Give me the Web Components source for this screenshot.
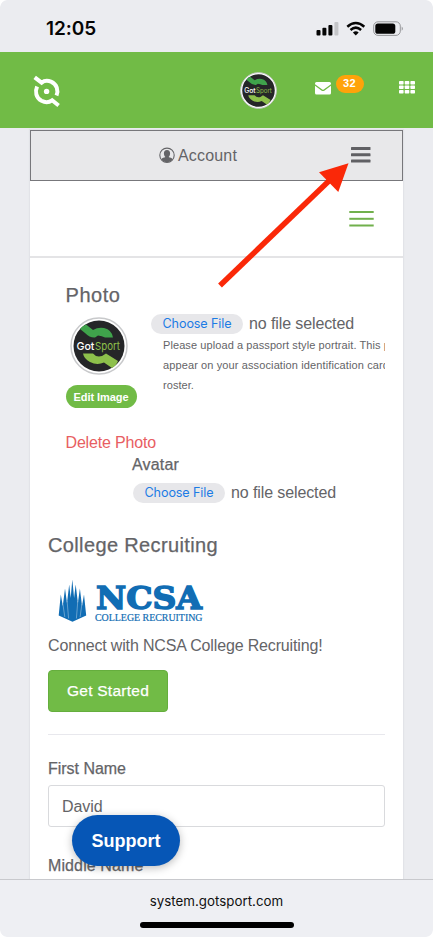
<!DOCTYPE html>
<html lang="en">
<head>
<meta charset="utf-8">
<title>GotSport account</title>
<style>
html,body{margin:0;height:100%;overflow:hidden;background:#ebecf0}
body{font-family:"Liberation Sans",Arial,sans-serif;color:#646467}
</style>
</head>
<body>
<account-screen></account-screen>
<script>
const define = (name, html, init) => customElements.define(name, class extends HTMLElement {
  connectedCallback() {
    if (this.shadowRoot) return;
    const t = document.createElement('template');
    t.innerHTML = html;
    this.attachShadow({mode: 'open'}).append(t.content.cloneNode(true));
    if (init) init.call(this);
  }
});

/* One line of text; "w" tracks the letters so that the line has that width. */
define('ui-text', `<style>
:host{display:block;white-space:nowrap;width:max-content;line-height:20px;font-size:16px}
:host([medium]) span{-webkit-text-stroke:.25px currentColor}
span{display:inline-block}
</style><span><slot></slot></span>`, function () {
  const w = parseFloat(this.getAttribute('w'));
  const s = this.shadowRoot.querySelector('span');
  const n = this.textContent.length;
  if (w && n) s.style.letterSpacing = ((w - s.getBoundingClientRect().width) / n) + 'px';
});

define('status-bar', `<style>
:host{display:flex;height:52px;box-sizing:border-box;padding:0 29px 0 46px;justify-content:space-between;color:#050505;font-family:Inter,sans-serif}
ui-text{font-size:19px;font-weight:600;line-height:24px;margin-top:17px}
svg{margin-top:20px}
</style>
<ui-text w="50">12:05</ui-text>
<svg width="88" height="18" viewBox="316 20 88 18">
<g fill="#050505"><rect x="316.5" y="30" width="4" height="5.5" rx="1"/><rect x="322.4" y="27.8" width="4" height="7.7" rx="1"/><rect x="328.4" y="25" width="4" height="10.5" rx="1"/></g>
<rect x="334.4" y="22" width="4" height="13.5" rx="1" fill="#c4c5c8"/>
<g fill="none" stroke="#050505" stroke-width="2.5"><path d="M347.3 26.7Q355.8 19.2 364.3 26.7"/><path d="M350.5 30Q355.8 25.3 361.1 30"/></g>
<path d="M352.9 32.4Q355.8 30 358.7 32.4L355.8 35.5Z" fill="#050505"/>
<rect x="373.7" y="21.8" width="26.6" height="13.6" rx="4.3" fill="none" stroke="#96979a"/>
<rect x="375.3" y="23.5" width="20" height="10.3" rx="2.6" fill="#050505"/>
<path d="M401.7 26.6q2.4 2 0 4.2z" fill="#96979a"/>
</svg>`);

define('gotsport-badge', `<style>:host{display:block}svg{display:block;width:100%;height:100%}</style>
<svg viewBox="0 0 58 58">
<circle cx="29" cy="29" r="28" fill="#fff" stroke="#c8c9cb" stroke-width="1.5"/>
<circle cx="29" cy="29" r="25.5" fill="#252628"/>
<path d="M16 7.5L23 13Q28 10 34 11Q42 13 43 20.5H35Q32 19 28 18.5L25 20.5Q20 21 15 16L10 12Q12 9 16 7.5Z" fill="#3fa34b"/>
<path d="M13 36.5H23Q26 40.5 32 39L36 36.5L48 44Q46 49 42 51L34 45.5Q27 48.5 20 45Q14 42 13 36.5Z" fill="#8dc04b"/>
<text x="6.5" y="32.6" style="font-family:Inter,sans-serif;font-size:11px;font-weight:500" fill="#fff" textLength="18" lengthAdjust="spacingAndGlyphs">Got</text>
<text x="25" y="32.6" style="font-family:Inter,sans-serif;font-size:11px" fill="#8dc04b" textLength="25" lengthAdjust="spacingAndGlyphs">Sport</text>
</svg>`);

define('app-header', `<style>
:host{display:flex;height:75.5px;background:#71bb46;box-sizing:border-box;padding-left:33px;align-items:flex-start;color:#fff}
.logo{margin-top:23px;flex:none}
gotsport-badge{width:37px;height:37px;margin:19.5px 0 0 179px;flex:none}
.mail{margin:30px 0 0 38px;flex:none}
.count{height:18px;width:28px;border-radius:9px;background:#ffa30a;margin:22.5px 0 0 4.5px;display:flex;justify-content:center;align-items:center;flex:none}
.count ui-text{font-size:11px;font-weight:700;line-height:17px}
.grid{margin:29px 0 0 35px;flex:none}
</style>
<svg class="logo" width="28" height="34" viewBox="33 75 28 34" fill="none" stroke="#fff">
<path stroke-width="4" d="M34.7 77.3L41.6 82.7C44 80.7 48 80.5 51 81.6C57 84.1 58.6 90.5 56.5 95.6"/>
<path stroke-width="4" d="M37.1 86.5C34.8 91.5 36 97.8 41.5 100.8C45 102.6 49 102.5 52.1 100.3L58.6 105.5"/>
<circle cx="46.6" cy="91.4" r="2.7" fill="#fff" stroke="none"/>
</svg>
<gotsport-badge></gotsport-badge>
<svg class="mail" width="16" height="13" viewBox="0 0 16 13" fill="#fff"><path d="M1.5 0h13A1.5 1.5 0 0 1 16 1.5V2.3L8.7 7.6Q8 8 7.3 7.6L0 2.3V1.5A1.5 1.5 0 0 1 1.5 0Z"/><path d="M0 3.8L6.7 8.7Q8 9.4 9.3 8.7L16 3.8V11A1.5 1.5 0 0 1 14.5 12.5H1.5A1.5 1.5 0 0 1 0 11Z"/></svg>
<div class="count"><ui-text w="13">32</ui-text></div>
<svg class="grid" width="17" height="13" viewBox="0 0 17 13" fill="#fff">
<rect x="0" y="0" width="4.6" height="3.5" rx=".7"/><rect x="5.7" y="0" width="4.6" height="3.5" rx=".7"/><rect x="11.4" y="0" width="4.6" height="3.5" rx=".7"/>
<rect x="0" y="4.5" width="4.6" height="3.5" rx=".7"/><rect x="5.7" y="4.5" width="4.6" height="3.5" rx=".7"/><rect x="11.4" y="4.5" width="4.6" height="3.5" rx=".7"/>
<rect x="0" y="9" width="4.6" height="3.5" rx=".7"/><rect x="5.7" y="9" width="4.6" height="3.5" rx=".7"/><rect x="11.4" y="9" width="4.6" height="3.5" rx=".7"/></svg>`);

define('account-bar', `<style>
:host{display:flex;height:51px;box-sizing:border-box;border:1px solid #77777b;background:#e8e8ea;padding-left:128px}
.user{margin:16px 3px 0 0}
ui-text{margin-top:15px}
.menu{margin:15px 0 0 113.5px}
</style>
<svg class="user" width="16" height="17" viewBox="0 0 16 17"><circle cx="8" cy="8.3" r="7.2" fill="none" stroke="#646467" stroke-width="1.1"/><path d="M8 3C10.1 3 11.2 4.5 11.1 6.6C11 8.3 10.3 9.5 9.6 10.1C10.9 10.8 12.9 10.9 13.5 12.2C12.2 14.1 10.3 15.1 8 15.1S3.8 14.1 2.5 12.2C3.1 10.9 5.1 10.8 6.4 10.1C5.7 9.5 5 8.3 4.9 6.6C4.8 4.5 5.9 3 8 3Z" fill="#646467"/></svg>
<ui-text w="59">Account</ui-text>
<svg class="menu" width="20" height="18" viewBox="0 0 20 18" fill="#606064"><rect y="1" width="19.5" height="3" rx=".6"/><rect y="7.3" width="19.5" height="3" rx=".6"/><rect y="13.6" width="19.5" height="3" rx=".6"/></svg>`);

define('nav-toggle', `<style>
:host{display:flex;height:77px;box-sizing:border-box;background:#fff;border-bottom:2px solid #e4e4e6;justify-content:flex-end;padding:30px 29px 0 0}
svg{display:block}
</style><svg width="25" height="18" viewBox="0 0 25 18" fill="#71b04c"><rect y="0" x=".3" width="24.4" height="2"/><rect y="6.8" x=".3" width="24.4" height="2"/><rect y="13.5" x=".3" width="24.4" height="2"/></svg>`);

define('file-picker', `<style>
:host{display:flex;height:20px;gap:6px}
.btn{width:92px;height:20px;border-radius:10px;background:#e7e7ea;color:#1c7ce5;display:flex;justify-content:center;font-family:Inter,sans-serif}
.btn ui-text{font-size:12.6px;line-height:20.5px}
.none{line-height:19px}
</style><div class="btn"><ui-text w="69">Choose File</ui-text></div><ui-text class="none" w="105">no file selected</ui-text>`);

define('photo-section', `<style>
:host{display:block;padding-left:17.5px}
.title{font-size:20px;line-height:24px}
.row{display:flex;margin-top:7px}
.left{width:85.5px;flex:none}
gotsport-badge{width:58px;height:58px;margin:2.5px 0 0 4px}
.edit{width:71px;height:23px;border-radius:12px;background:#71bb46;color:#fff;display:flex;justify-content:center;margin:10.5px 0 0}
.edit ui-text{font-size:11px;font-weight:700;line-height:24px}
.right{min-width:0;flex:1;overflow:hidden}
.help{padding:1px 0 0 12px}
.help ui-text{font-size:11px;line-height:20px}
.delete{color:#e85e62;margin-top:25px}
.avatar{margin:2px 0 0 66.5px}
.second{margin:8px 0 0 67.5px}
</style>
<ui-text class="title" medium w="55">Photo</ui-text>
<div class="row">
<div class="left"><gotsport-badge></gotsport-badge><div class="edit"><ui-text w="55">Edit Image</ui-text></div></div>
<div class="right"><file-picker></file-picker><div class="help">
<ui-text w="227">Please upload a passport style portrait. This p</ui-text>
<ui-text w="226">appear on your association identification card</ui-text>
<ui-text w="31">roster.</ui-text></div></div>
</div>
<ui-text class="delete" w="90.5">Delete Photo</ui-text>
<ui-text class="avatar" medium w="47">Avatar</ui-text>
<file-picker class="second"></file-picker>`);

define('ncsa-logo', `<style>:host{display:block}svg{display:block}</style>
<svg width="146" height="44" viewBox="58 579 146 44">
<path fill="#116db4" d="M58.7 615.5L60.8 594.5L62.8 606L65 588.5L67 603L69.2 584.5L70.7 598L72.3 579.5L74.1 598L75.7 584.5L77.9 603L79.9 588.5L82 606L84 594.5L86.2 615.5L72.5 621.7Z"/>
<g stroke="#fff" stroke-width=".5" opacity=".7"><path d="M62.9 604L64.8 617M67.1 601L68.6 618.5M77.8 601L76.4 618.5M81.9 604L80.1 617"/></g>
<text x="96" y="608.9" style="font-family:'DejaVu Serif',serif;font-size:32px;font-weight:700" fill="#116db4" stroke="#116db4" stroke-width="1.5" textLength="106" lengthAdjust="spacingAndGlyphs">NCSA</text>
<text x="95" y="621.3" style="font-family:'Liberation Serif',serif;font-size:9.6px" fill="#116db4" stroke="#116db4" stroke-width=".2" textLength="107.5" lengthAdjust="spacingAndGlyphs">COLLEGE RECRUITING</text>
</svg>`);

define('recruiting-section', `<style>
:host{display:block;margin-top:30px}
.title{font-size:20px;line-height:24px}
ncsa-logo{margin:22px 0 0 10px}
.text{margin-top:12.5px}
.btn{width:120px;height:42px;border-radius:4px;box-sizing:border-box;border:1px solid #65ae3d;background:#71bb46;color:#fff;display:flex;align-items:center;justify-content:center;margin-top:14px}
.btn ui-text{font-size:15.5px;line-height:21px}
hr{border:0;height:1px;background:#e8e8ed;margin:22px 0 0}
</style>
<ui-text class="title" medium w="170">College Recruiting</ui-text>
<ncsa-logo></ncsa-logo>
<ui-text class="text" w="274.5">Connect with NCSA College Recruiting!</ui-text>
<div class="btn"><ui-text medium w="82">Get Started</ui-text></div>
<hr>`);

define('form-field', `<style>
:host{display:block}
.box{height:42px;box-sizing:border-box;border:1px solid #d9dadd;border-radius:3px;margin-top:6px;padding:10.5px 13px}
</style><slot name="label"></slot><div class="box"><slot></slot></div>`);

define('support-button', `<style>
:host{display:flex;width:108px;height:51px;border-radius:26px;background:#0656b6;color:#fff;align-items:center;justify-content:center;box-shadow:0 2px 9px #0004}
ui-text{font-size:18px;font-weight:700}
</style><ui-text w="69">Support</ui-text>`);

define('browser-bar', `<style>
:host{display:flex;flex-direction:column;align-items:center;height:58px;box-sizing:border-box;background:#eeeff3;border-top:1px solid #c8c9cd;color:#111;font-family:Inter,sans-serif}
ui-text{font-size:13.3px;margin-top:11px}
.home{width:154px;height:6px;border-radius:3px;background:#000;margin-top:11px}
</style><ui-text w="133.5">system.gotsport.com</ui-text><div class="home"></div>`);

define('account-screen', `<style>
:host{display:grid;grid-template-rows:52px 76px 1fr 58px;width:433px;height:937px;position:relative;overflow:hidden;background:#ebecf0}
main{width:373px;margin:2px 0 0 30px;min-height:0;overflow:hidden;background:#fff;box-shadow:0 0 1px 1px #e2e3e8}
.card{padding:25px 18px 0}
form-field{margin-top:24.5px}
.middle{margin-top:28.5px}
support-button{position:absolute;left:72px;top:815px}
.arrow{position:absolute;left:0;top:0;pointer-events:none}
.corners{position:absolute;left:0;top:0;pointer-events:none}
</style>
<status-bar></status-bar>
<app-header></app-header>
<main><account-bar></account-bar><nav-toggle></nav-toggle>
<div class="card"><photo-section></photo-section><recruiting-section></recruiting-section>
<form-field><ui-text slot="label" medium w="78">First Name</ui-text><ui-text w="40.5">David</ui-text></form-field>
<form-field class="middle"><ui-text slot="label" medium w="95.5">Middle Name</ui-text></form-field></div></main>
<browser-bar></browser-bar>
<support-button></support-button>
<svg class="arrow" width="433" height="300"><path d="M220 285.5L332 178" stroke="#fa2808" stroke-width="5.5" fill="none"/><path d="M348.5 163.3L319 172.3L338.3 192Z" fill="#fa2808"/></svg>
<svg class="corners" width="433" height="937" fill="#fff"><path d="M0 0H7Q1 1 0 7ZM433 0H426Q432 1 433 7ZM433 937H426Q432 936 433 930ZM0 937H7Q1 936 0 930Z"/></svg>`);
</script>
</body>
</html>
